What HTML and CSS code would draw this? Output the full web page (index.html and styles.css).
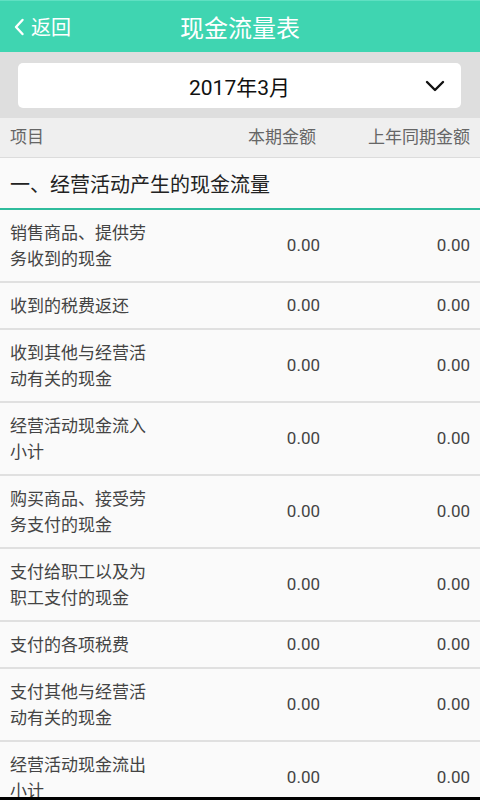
FILE: index.html
```html
<!DOCTYPE html>
<html lang="zh-CN">
<head>
<meta charset="utf-8">
<title>现金流量表</title>
<link rel="stylesheet" href="styles.css">
</head>
<body>
<div class="app">
  <header class="topbar">
    <div class="back">
      <svg class="back-icon" width="12" height="18" viewBox="0 0 12 18"><path d="M9.5 2 L3 9 L9.5 16" fill="none" stroke="#fff" stroke-width="2.4" stroke-linecap="round" stroke-linejoin="round"/></svg>
      <span>返回</span>
    </div>
    <div class="title">现金流量表</div>
  </header>
  <div class="filter">
    <div class="select">
      <span class="select-text">2017年3月</span>
      <svg class="chev" width="20" height="12" viewBox="0 0 20 12"><path d="M2 2 L10 10 L18 2" fill="none" stroke="#111" stroke-width="2.4" stroke-linecap="round" stroke-linejoin="round"/></svg>
    </div>
  </div>
  <div class="colhead">
    <span>项目</span>
    <span class="num">本期金额</span>
    <span class="num">上年同期金额</span>
  </div>
  <div class="section">一、经营活动产生的现金流量</div>
  <div class="row"><span class="label">销售商品、提供劳务收到的现金</span><span class="num">0.00</span><span class="num">0.00</span></div>
  <div class="row"><span class="label">收到的税费返还</span><span class="num">0.00</span><span class="num">0.00</span></div>
  <div class="row"><span class="label">收到其他与经营活动有关的现金</span><span class="num">0.00</span><span class="num">0.00</span></div>
  <div class="row"><span class="label">经营活动现金流入小计</span><span class="num">0.00</span><span class="num">0.00</span></div>
  <div class="row"><span class="label">购买商品、接受劳务支付的现金</span><span class="num">0.00</span><span class="num">0.00</span></div>
  <div class="row"><span class="label">支付给职工以及为职工支付的现金</span><span class="num">0.00</span><span class="num">0.00</span></div>
  <div class="row"><span class="label">支付的各项税费</span><span class="num">0.00</span><span class="num">0.00</span></div>
  <div class="row"><span class="label">支付其他与经营活动有关的现金</span><span class="num">0.00</span><span class="num">0.00</span></div>
  <div class="row"><span class="label">经营活动现金流出小计</span><span class="num">0.00</span><span class="num">0.00</span></div>
</div>
</body>
</html>
```
FILE: styles.css
```css
* { box-sizing: border-box; }
html, body {
  margin: 0;
  padding: 0;
  height: 800px;
  overflow: hidden;
  background: #000;
  font-family: Roboto, "Noto Sans CJK SC", sans-serif;
}
.app {
  height: 797px;
  overflow: hidden;
  background: #fafafa;
}
.topbar {
  position: relative;
  height: 52px;
  background: #3fd5b1;
  border-top: 1px solid #5fe0c2;
  display: flex;
  align-items: center;
  justify-content: center;
  color: #fff;
}
.back {
  position: absolute;
  left: 13px;
  top: 0;
  bottom: 0;
  display: flex;
  align-items: center;
  gap: 6px;
  font-size: 20px;
}
.back-icon { margin-top: 1px; }
.title {
  font-size: 24px;
}
.filter {
  background: #dedede;
  padding: 11px 19px 10px 18px;
}
.select {
  position: relative;
  height: 45px;
  background: #fff;
  border-radius: 5px;
  display: flex;
  align-items: center;
  justify-content: center;
}
.select-text {
  font-size: 21px;
  color: #111;
}
.chev {
  position: absolute;
  right: 16px;
  top: 17px;
}
.colhead {
  height: 40px;
  background: #efefef;
  border-bottom: 1px solid #dcdcdc;
  display: grid;
  grid-template-columns: 150px 1fr 150px;
  align-items: center;
  padding: 0 10px 4px;
  font-size: 17px;
  color: #666;
}
.num { text-align: right; }
.colhead .num:nth-child(2) { padding-right: 4px; }
.section {
  height: 52px;
  background: #fafafa;
  border-bottom: 2px solid #2fbc9c;
  display: flex;
  align-items: center;
  padding: 0 10px;
  font-size: 20px;
  color: #222;
}
.row {
  display: grid;
  grid-template-columns: 140px 1fr 150px;
  align-items: center;
  padding: 10px 10px 9px 10px;
  border-bottom: 2px solid #e0e0e0;
  font-size: 17px;
  line-height: 26px;
  color: #444;
}
.row .num { margin-top: -2px; }
.label { color: #444; }
```
